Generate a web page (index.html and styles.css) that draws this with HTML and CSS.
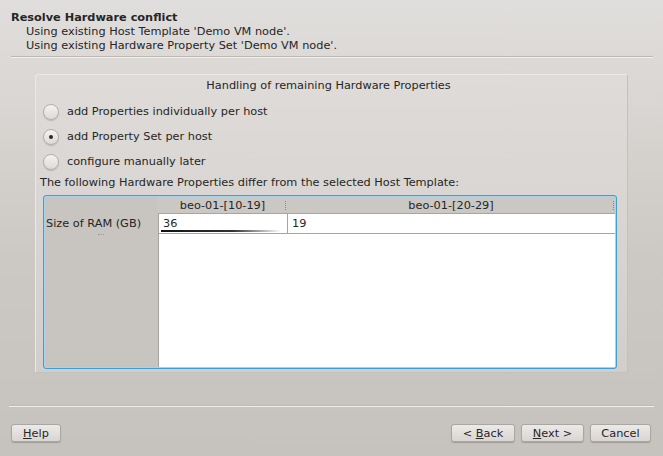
FILE: index.html
```html
<!DOCTYPE html>
<html lang="en">
<head>
    <meta charset="UTF-8">
    <meta name="viewport" content="width=device-width, initial-scale=1.0">
    <title>Resolve Hardware conflict</title>
    <link rel="stylesheet" href="styles.css">
</head>
<body>
    <div class="dialog">
        <div class="header">
            <div class="title">Resolve Hardware conflict</div>
            <div class="subtitle">Using existing Host Template 'Demo VM node'.</div>
            <div class="subtitle">Using existing Hardware Property Set 'Demo VM node'.</div>
        </div>
        <div class="separator top-sep"></div>

        <div class="groupbox">
            <div class="group-title">Handling of remaining Hardware Properties</div>
            <div class="radio-list">
                <label class="radio-row"><span class="radio"></span>add Properties individually per host</label>
                <label class="radio-row"><span class="radio checked"></span>add Property Set per host</label>
                <label class="radio-row"><span class="radio"></span>configure manually later</label>
            </div>
            <div class="info">The following Hardware Properties differ from the selected Host Template:</div>
            <div class="table-frame">
                <div class="grid">
                    <div class="corner"></div>
                    <div class="hcell">beo-01-[10-19]<span class="grip"></span></div>
                    <div class="hcell">beo-01-[20-29]<span class="grip"></span></div>
                    <div class="vcell">Size of RAM (GB)<span class="vgrip"></span></div>
                    <div class="cell current">36</div>
                    <div class="cell">19</div>
                    <div class="vfill"></div>
                    <div class="fill"></div>
                </div>
            </div>
        </div>

        <div class="separator bottom-sep"></div>
        <div class="buttons">
            <button class="btn help"><u>H</u>elp</button>
            <div class="spacer"></div>
            <button class="btn back">&lt; <u>B</u>ack</button>
            <button class="btn next"><u>N</u>ext &gt;</button>
            <button class="btn cancel">Cancel</button>
        </div>
    </div>
</body>
</html>
```

FILE: styles.css
```css
html, body {
    margin: 0;
    height: 100%;
}
body {
    font-family: "DejaVu Sans", "Liberation Sans", sans-serif;
    font-size: 11.3px;
    color: #262626;
    background: linear-gradient(to bottom, #e0dedc 0, #dad7d4 90px, #ccc8c4 260px, #c6c2be 100%);
}
.dialog {
    display: flex;
    flex-direction: column;
    height: 456px;
}
.header {
    padding: 11px 11px 0 11px;
    line-height: 14px;
}
.title {
    font-weight: bold;
}
.subtitle {
    padding-left: 15px;
}
.separator {
    height: 0;
    border-top: 1px solid #bdb9b5;
    border-bottom: 1px solid #f2f0ee;
}
.top-sep {
    margin: 3px 10px 0 11px;
}
.groupbox {
    margin: 16px 35px 0 35px;
    height: 293px;
    padding: 4px 10px 0 4px;
    border: 1px solid #c4c0bc;
    border-top-color: #ece9e7;
    border-left-color: #ebe8e6;
    border-radius: 3px;
    background: linear-gradient(to bottom, #dedbd8, #d2cecb);
    display: flex;
    flex-direction: column;
}
.group-title {
    text-align: center;
    line-height: 13px;
}
.radio-list {
    margin-top: 7px;
    display: flex;
    flex-direction: column;
}
.radio-row {
    height: 25px;
    display: flex;
    align-items: center;
    gap: 8px;
    padding-left: 3px;
}
.radio {
    width: 14px;
    height: 14px;
    border-radius: 50%;
    border: 1px solid #b3afab;
    background: linear-gradient(to bottom, #f4f3f2, #dddad7);
    box-shadow: 0 1px 1px rgba(0, 0, 0, 0.15);
    position: relative;
}
.radio.checked::after {
    content: "";
    position: absolute;
    left: 5px;
    top: 5px;
    width: 4px;
    height: 4px;
    border-radius: 50%;
    background: #2a2a2a;
}
.info {
    margin-top: 2px;
    line-height: 13px;
}
.table-frame {
    margin: 6px 0 0 3px;
    height: 170px;
    border: 1px solid #3d9fd9;
    border-radius: 3px;
    box-shadow: inset 0 0 0 1px #a6d3ef;
    padding: 1px;
    background: #c8c4c0;
}
.grid {
    height: 100%;
    display: grid;
    grid-template-columns: 113px 129px 1fr;
    grid-template-rows: 17px 20px 1fr;
}
.corner {
    background: #c8c4c0;
}
.hcell {
    position: relative;
    text-align: center;
    line-height: 17px;
    background: #cbc7c3;
    border-bottom: 1px solid #a8a4a0;
    box-sizing: border-box;
}
.grip {
    position: absolute;
    right: 1px;
    top: 4px;
    height: 9px;
    border-left: 1px dotted #8a8682;
}
.vcell {
    position: relative;
    padding-left: 1px;
    line-height: 20px;
    background: #c8c4c0;
}
.vgrip {
    position: absolute;
    left: 53px;
    bottom: -1px;
    width: 6px;
    border-top: 1px dotted #9a9692;
}
.cell {
    background: #fff;
    border-left: 1px solid #a8a4a0;
    border-bottom: 1px solid #a8a4a0;
    padding-left: 4px;
    line-height: 20px;
    position: relative;
}
.cell.current::after {
    content: "";
    position: absolute;
    left: 2px;
    right: 6px;
    bottom: 1px;
    height: 2px;
    background: linear-gradient(to right, #111 0, #333 60%, rgba(80, 80, 80, 0) 100%);
}
.vfill {
    background: #c8c4c0;
}
.fill {
    grid-column: 2 / 4;
    background: #fff;
    border-left: 1px solid #a8a4a0;
}
.bottom-sep {
    margin: 32px 9px 0 9px;
}
.buttons {
    display: flex;
    gap: 6px;
    margin: 17px 12px 0 11px;
}
.spacer {
    flex: 1;
}
.btn {
    height: 18px;
    padding: 0;
    font-family: inherit;
    font-size: 11.3px;
    color: #262626;
    border: 1px solid #aaa6a2;
    border-radius: 3px;
    background: linear-gradient(to bottom, #eceae8, #d8d5d2);
    box-shadow: 0 1px 1px rgba(0, 0, 0, 0.2);
}
.help {
    width: 50px;
}
.back {
    width: 64px;
}
.next {
    width: 63px;
}
.cancel {
    width: 61px;
}
```
